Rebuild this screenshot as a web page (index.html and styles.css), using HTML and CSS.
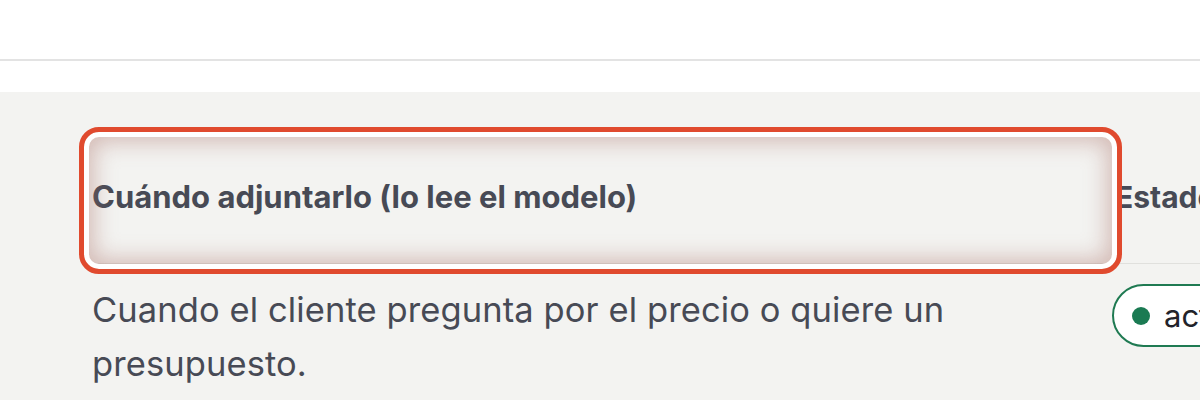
FILE: index.html
```html
<!DOCTYPE html>
<html lang="es">
<head>
<meta charset="utf-8">
<link rel="stylesheet" href="styles.css">
</head>
<body>
<div class="topbar"></div>
<div class="divider"></div>
<div class="spacer"></div>
<section class="table">
  <div class="row head">
    <div class="cell c1">Cuándo adjuntarlo (lo lee el modelo)</div>
    <div class="cell c2">Estado</div>
    <div class="highlight"></div>
  </div>
  <div class="row body">
    <div class="cell c1">Cuando el cliente pregunta por el precio o quiere un presupuesto.</div>
    <div class="cell c2"><span class="badge"><span class="dot"></span>activo</span></div>
  </div>
</section>
</body>
</html>
```

FILE: styles.css
```css
html, body {
  margin: 0;
  padding: 0;
  background: #ffffff;
  overflow: hidden;
  width: 1200px;
  height: 400px;
}
body {
  font-family: Inter, "Noto Sans", "Liberation Sans", sans-serif;
  color: #474a55;
}
.topbar {
  height: 59px;
}
.divider {
  height: 2px;
  background: #e3e3e3;
}
.spacer {
  height: 31px;
}
.table {
  background: #f3f3f1;
  padding-left: 92px;
  height: 308px;
  overflow: hidden;
}
.row {
  display: grid;
  grid-template-columns: 1020px 300px;
  position: relative;
}
.head {
  border-bottom: 1px solid #e0e0dd;
}
.head .cell {
  font-weight: 700;
  font-size: 31px;
  line-height: 38px;
  padding-top: 86px;
  padding-bottom: 47px;
  white-space: nowrap;
}
.head .c2 {
  padding-left: 3px;
  font-size: 30px;
}
.highlight {
  position: absolute;
  left: -13px;
  top: 35px;
  width: 1043px;
  height: 147px;
  box-sizing: border-box;
  border: 5px solid #e04a2e;
  border-radius: 20px;
  box-shadow: inset 0 0 0 5px #ffffff, inset 0 0 22px 10px rgba(170, 110, 100, 0.42);
}
.body .c1 {
  font-size: 34.5px;
  line-height: 54px;
  letter-spacing: 0.1px;
  padding-top: 19px;
  padding-right: 110px;
}
.body .c2 {
  padding-top: 20px;
}
.badge {
  display: inline-flex;
  align-items: center;
  height: 63px;
  box-sizing: border-box;
  border: 2px solid #1f7a52;
  border-radius: 32px;
  background: #ffffff;
  padding: 0 24px 0 18px;
  font-size: 31px;
  color: #22232a;
  gap: 14px;
  white-space: nowrap;
}
.dot {
  width: 18px;
  height: 18px;
  border-radius: 50%;
  background: #1a7a52;
}
```
